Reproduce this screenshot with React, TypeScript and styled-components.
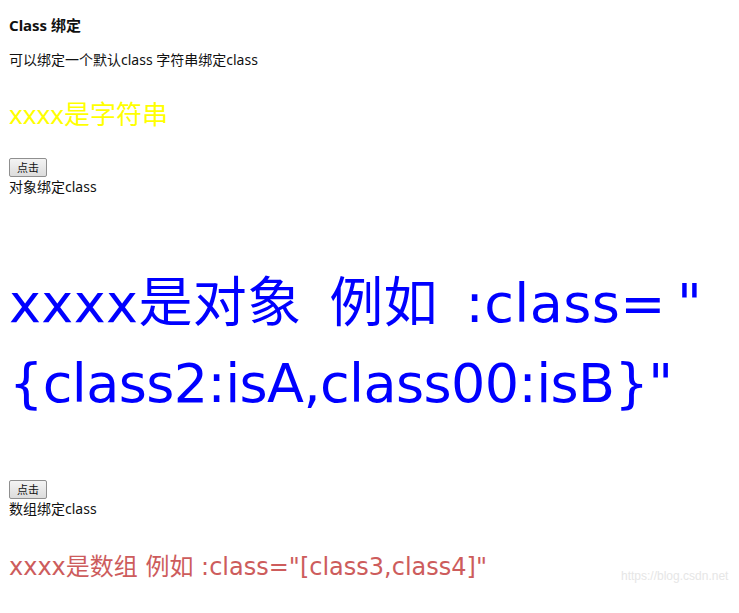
import styled, { createGlobalStyle } from "styled-components";

const GlobalStyle = createGlobalStyle`
  html, body {
    margin: 0;
    padding: 0;
    background: #ffffff;
    overflow: hidden;
  }
  body {
    font-family: "Noto Sans", "Noto Sans CJK SC", sans-serif;
    color: #111111;
  }
`;

const Page = styled.div`
  position: relative;
  width: 739px;
  height: 613px;
  padding: 14px 0 0 9px;
  box-sizing: border-box;
`;

const Title = styled.h3`
  margin: 0;
  font-size: 15px;
  line-height: 22px;
  font-weight: 700;
`;

const Text = styled.p`
  margin: 14px 0 0;
  font-size: 14px;
  line-height: 20px;
`;

type ShowProps = {
  color: string;
  size: number;
  lineHeight: number;
  top: number;
  wide?: boolean;
};

const Show = styled.div<ShowProps>`
  margin-top: ${({ top }) => top}px;
  color: ${({ color }) => color};
  font-family: ${({ wide }) =>
    wide
      ? `"DejaVu Sans", "Noto Sans CJK SC", sans-serif`
      : `"Noto Sans", "Noto Sans CJK SC", sans-serif`};
  font-size: ${({ size }) => size}px;
  line-height: ${({ lineHeight }) => lineHeight}px;
  white-space: nowrap;
`;

type LineProps = {
  spacing: number;
  wordSpacing?: number;
};

const Line = styled.span<LineProps>`
  display: block;
  letter-spacing: ${({ spacing }) => spacing}px;
  word-spacing: ${({ wordSpacing }) => wordSpacing ?? 0}px;
`;

type BlockProps = {
  top: number;
};

const ButtonBlock = styled.div<BlockProps>`
  margin-top: ${({ top }) => top}px;
  display: flex;
  flex-direction: column;
  align-items: flex-start;
`;

const Button = styled.button`
  width: 38px;
  height: 19px;
  padding: 0;
  font-family: "Noto Sans CJK SC", sans-serif;
  font-size: 11px;
  line-height: 17px;
  color: #111111;
  background: linear-gradient(#f4f4f4, #dcdcdc);
  border: 1px solid #8f8f8f;
  border-radius: 2px;
`;

const Label = styled.span`
  font-size: 14px;
  line-height: 20px;
`;

const Watermark = styled.div`
  position: absolute;
  left: 621px;
  top: 569px;
  font-family: "Liberation Sans", Arial, sans-serif;
  font-size: 12px;
  color: #e6e6e6;
  white-space: nowrap;
`;

export default function App() {
  return (
    <>
      <GlobalStyle />
      <Page>
        <Title>Class 绑定</Title>
        <Text>可以绑定一个默认class 字符串绑定class</Text>
        <Show color="#ffff00" size={26} lineHeight={34} top={27}>
          xxxx是字符串
        </Show>
        <ButtonBlock top={27}>
          <Button>点击</Button>
          <Label>对象绑定class</Label>
        </ButtonBlock>
        <Show color="#0000ff" size={54} lineHeight={80} top={67} wide>
          <Line spacing={0.4} wordSpacing={10}>
            xxxx是对象 例如 :class={"\u2009"}"
          </Line>
          <Line spacing={-0.6}>{"{class2:isA,class00:isB}"}"</Line>
        </Show>
        <ButtonBlock top={56}>
          <Button>点击</Button>
          <Label>数组绑定class</Label>
        </ButtonBlock>
        <Show color="#cd5c5c" size={24} lineHeight={34} top={31} wide>
          xxxx是数组 例如 :class="[class3,class4]"
        </Show>
        <Watermark>https://blog.csdn.net</Watermark>
      </Page>
    </>
  );
}
